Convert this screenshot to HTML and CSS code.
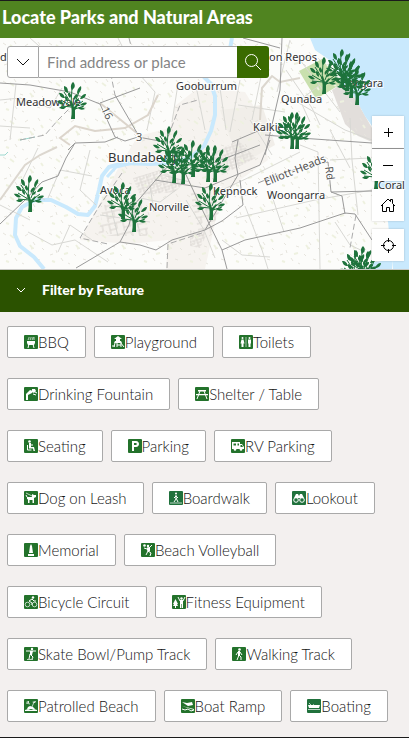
FILE: index.html
```html
<!DOCTYPE html>
<html lang="en">
<head>
    <meta charset="UTF-8">
    <meta name="viewport" content="width=device-width, initial-scale=1.0">
    <title>Locate Parks and Natural Areas</title>
    <link rel="stylesheet" href="styles.css">
</head>
<body>
    <header class="app-header">
        <h1>Locate Parks and Natural Areas</h1>
    </header>

    <section class="map" aria-label="Map">
        <svg class="map-canvas" viewBox="0 38 409 231" aria-hidden="true">
            <defs>
                <pattern id="relief" width="46" height="38" patternUnits="userSpaceOnUse">
                    <path d="M3 5l3 2M14 3l2 3M25 8l3-2M38 4l2 3M8 15l2 2M20 18l3 1M33 14l2 3M42 20l2 2M4 27l3-1M15 30l2 3M28 26l2 2M37 31l3 1M22 35l2 1M10 22l1 3M31 21l3-1" stroke="#e6e4dd" fill="none"/>
                    <path d="M10 7l4 3M30 17l3 4M18 26l4-1M41 11l2 3M6 33l3 1" stroke="#eef1e0" stroke-width="2" fill="none"/>
                </pattern>
                <pattern id="streets" width="7" height="6" patternUnits="userSpaceOnUse" patternTransform="rotate(-18)">
                    <path d="M0 1h7M0 4h5M1 0v6M5 1v3" stroke="#dcd8d4" fill="none"/>
                </pattern>
                <pattern id="blocks" width="14" height="12" patternUnits="userSpaceOnUse" patternTransform="rotate(-12)">
                    <path d="M0 2h14M4 2v10M4 8h7M11 2v6" stroke="#d9d5d0" fill="none"/>
                </pattern>
                <symbol id="tree" viewBox="0 0 30 37">
                    <path d="M14 37c1-6 1-12-1-17l2-1 2 6 4-4 1 1-4 6v9z"/>
                    <path d="M14 22L15 6M14 21L7 10M14 24L4 18M15 25L4 24M17 23L22 10M17 26L26 19M18 27L27 24" fill="none" stroke="#1e733c"/>
                    <path d="M16 0c3 3 2 6-1 8-2-3-1-6 1-8zM7 4c4 1 4 4 4 7-4-1-4-4-4-7zM24 4c1 4-1 6-4 8 0-4 1-6 4-8zM2 11c4 0 5 2 6 5-4 0-5-2-6-5zM29 12c0 3-3 5-6 5 1-3 3-5 6-5zM0 19c4-1 5 1 7 3-3 1-5 0-7-3zM30 21c-2 3-4 3-7 2 2-2 4-3 7-2zM12 10c2 2 3 4 1 6-2-2-3-4-1-6zM20 12c1 3-1 4-3 6-1-3 0-4 3-6zM8 14c3 1 3 3 3 6-3-2-3-3-3-6zM2 26c2-2 4-2 7-1-2 3-4 2-7 1zM28 27c-3 1-5 1-7-1 2-2 5-1 7 1zM22 16c0 3-2 4-4 4 0-2 2-3 4-4z"/>
                </symbol>
            </defs>

            <rect y="38" width="409" height="231" fill="#fcfcfa"/>
            <!-- urban areas -->
            <path d="M138 136L170 128 175 106 198 88 245 92 262 120 268 160 240 180 220 200 205 269H166L168 240 130 244 80 240 95 212 120 165z" fill="#f6f3ef"/>
            <path d="M220 110L262 105 275 145 240 165z" fill="#f1eee9"/>
            <path d="M133 178L160 170 185 182 175 192 140 195zM210 155L238 140 256 158 222 175zM190 230L206 236 200 248 190 246z" fill="url(#streets)"/>
            <path d="M104 205L140 200 150 236 98 236zM190 190L222 205 210 235 200 240z" fill="url(#blocks)"/>
            <path d="M332 90L345 82 356 100 372 128V142L358 136 345 124z" fill="#e2dedb"/>
            <path d="M299 71L322 59 341 84 316 99z" fill="#c9e0ae"/>
            <rect y="38" width="409" height="231" fill="url(#relief)"/>

            <!-- sea and rivers -->
            <path d="M310 38L315 50 328 59 337 70 346 84 357 101 365 116 372 126 376 160 382 200 388 222 391 252 393 269H409V38z" fill="#c9e9fd"/>
            <path d="M372 262l20-2v9h-24z" fill="#c9e9fd"/>
            <g fill="none" stroke="#c9e9fd">
                <path d="M44 269L34 257 20 246 15 235 16 218 22 207 35 200 51 200 66 207 78 214 88 215 95 206 99 190 102 176 109 167 124 163 150 164 170 163 190 158 204 146 211 131 215 115 215 96 211 84 204 77 205 68 228 60 232 38" stroke-width="4" stroke-linejoin="round"/>
                <path d="M107 177L116 167 133 163" stroke-width="3"/>
            </g>
            <path d="M0 155L5 155 8 152M20 140L35 137" stroke="#9cd8cf" fill="none"/>

            <!-- minor roads -->
            <g fill="none" stroke="#d8d8d4">
                <path d="M0 100L20 98 50 108 62 88M16 84L10 140M30 38L55 60M118 38L132 66 155 92 147 130M0 126L30 128M38 148L20 185 45 200M90 150L80 190 96 205M48 198L60 170 92 176M0 205L30 220M58 252L70 225 92 240M28 232L52 245 75 240 108 262M178 84L172 122M196 86L205 130M220 88L226 130M186 200L204 230 215 258M166 176L190 182M140 198L160 202 176 190M100 215L150 222M110 204L118 236M130 202L140 232M150 186L154 212"/>
                <path d="M240 80L230 132M262 72L252 120M290 40L277 92M238 105L285 112M286 70L312 108 320 125M300 60L340 112M320 85L300 100 310 122M285 95L345 130 372 140M250 120L272 155M300 145L318 152 320 269M350 118L352 160 358 215M245 206L262 250 268 269M222 190L252 176 300 152M236 218L315 200 372 190M270 190L284 232M222 240L242 255 270 257M335 222L350 245 365 252M330 160L370 158M330 130L350 168"/>
            </g>
            <path d="M260 120L262 88 272 76 280 82 300 78M0 200L25 165 40 155 57 147" fill="none" stroke="#dcd7cf" stroke-width="2"/>
            <path d="M70 145L60 138 75 126 95 131 125 128 148 115 158 95M100 103L138 134" fill="none" stroke="#dcd5cc" stroke-width="2"/>

            <!-- main roads -->
            <g fill="none" stroke="#9a9a9a">
                <path d="M0 83L30 85 70 92 100 104 115 137 125 141 138 137 165 142M115 95L140 138M100 103L140 88M68 150L75 143 105 142 118 137M0 224L25 200 42 182 58 176 66 158 75 143M76 268L120 242 129 225 134 205 168 166 180 155M120 242L140 245 156 250 172 240 205 230 222 221 243 205 240 180M182 166L200 205 222 250 227 269M155 180L205 188 260 165 270 140M200 168L260 145M205 230L238 175 235 158 238 140M222 250L245 240 300 228 345 213 355 214 372 240M258 183L275 176 300 168 328 162 331 192 342 196 345 214M331 192L372 191M232 142L265 128"/>
                <path d="M243 38L280 48M282 38L280 90 265 155M265 135L300 138 372 143"/>
            </g>
            <path d="M129 38L132 50 110 70 115 95M20 140L45 135 58 120 72 106M122 173L100 205 80 238 108 244M167 268L168 244 205 232M356 215L350 248M165 145L180 105 198 100" fill="none" stroke="#ababab" stroke-dasharray="6 3"/>

            <g class="map-labels">
                <text x="0" y="61">d</text>
                <text x="16" y="106">Meadowvale</text>
                <text x="176" y="90">Gooburrum</text>
                <text x="259" y="61">Mon Repos</text>
                <text x="281" y="103">Qunaba</text>
                <text x="253" y="131">Kalkie</text>
                <text x="342" y="87">Bargara</text>
                <text class="city" x="108" y="162">Bundaberg</text>
                <text x="100" y="194">Avoca</text>
                <text x="149" y="211">Norville</text>
                <text x="213" y="195">Kepnock</text>
                <text x="267" y="199">Woongarra</text>
                <text class="road" transform="translate(266 186) rotate(-22)">Elliott-Heads</text>
                <text class="road" transform="translate(325 167) rotate(82)">Rd</text>
                <text class="road" transform="translate(101 109) rotate(65)">16</text>
                <text class="road" x="136" y="141">3</text>
            </g>

            <g fill="#1e733c">
                <use href="#tree" x="57" y="82" width="30" height="37"/>
                <use href="#tree" x="14" y="175" width="30" height="37"/>
                <use href="#tree" x="153" y="126" width="30" height="37"/>
                <use href="#tree" x="158" y="146" width="30" height="37"/>
                <use href="#tree" x="167" y="147" width="30" height="37"/>
                <use href="#tree" x="177" y="140" width="30" height="37"/>
                <use href="#tree" x="192" y="145" width="30" height="37"/>
                <use href="#tree" x="199" y="145" width="30" height="37"/>
                <use href="#tree" x="195" y="183" width="30" height="37"/>
                <use href="#tree" x="107" y="182" width="30" height="37"/>
                <use href="#tree" x="118" y="195" width="30" height="37"/>
                <use href="#tree" x="276" y="112" width="30" height="37"/>
                <use href="#tree" x="281" y="112" width="30" height="37"/>
                <use href="#tree" x="308" y="57" width="30" height="37"/>
                <use href="#tree" x="326" y="49" width="30" height="37"/>
                <use href="#tree" x="331" y="54" width="30" height="37"/>
                <use href="#tree" x="335" y="61" width="30" height="37"/>
                <use href="#tree" x="341" y="68" width="30" height="37"/>
                <use href="#tree" x="360" y="152" width="30" height="37"/>
                <use href="#tree" x="340" y="250" width="30" height="37"/>
                <use href="#tree" x="347" y="246" width="30" height="37"/>
                <use href="#tree" x="352" y="251" width="30" height="37"/>
            </g>
            <g class="map-labels">
                <text x="378" y="189">Coral</text>
            </g>
        </svg>

        <form class="search" role="search">
            <button class="search-source" type="button" aria-label="Search sources">
                <svg width="14" height="14" viewBox="0 0 14 14"><path d="M1 4l6 6 6-6"/></svg>
            </button>
            <input class="search-input" type="text" aria-label="Find address or place" placeholder="Find address or place">
            <button class="search-submit" type="button" aria-label="Search">
                <svg width="18" height="18" viewBox="0 0 18 18"><circle cx="7.500" cy="7.500" r="6"/><path d="M12 12l5 5"/></svg>
            </button>
        </form>

        <div class="map-tools">
            <div class="tool-group">
                <button class="tool-btn" type="button" aria-label="Zoom in">
                    <svg width="16" height="16" viewBox="0 0 16 16"><path d="M8.500 4v9M4 8.500h9"/></svg>
                </button>
                <button class="tool-btn" type="button" aria-label="Zoom out">
                    <svg width="16" height="16" viewBox="0 0 16 16"><path d="M3 8.500h10"/></svg>
                </button>
            </div>
            <button class="tool-btn" type="button" aria-label="Default map view">
                <svg width="16" height="16" viewBox="0 0 16 16"><path d="M1 9l7-7 2.500 2.500V2.500h2v4L15 9M2.500 8v6.500h4v-4h3v4h4V8"/></svg>
            </button>
            <button class="tool-btn" type="button" aria-label="Find my location">
                <svg width="16" height="16" viewBox="0 0 16 16"><circle cx="8.500" cy="8.500" r="5"/><path d="M8.500 1v4M8.500 12v4M1 8.500h4M12 8.500h4"/></svg>
            </button>
        </div>
    </section>

    <main class="filter">
        <button class="filter-toggle" type="button" aria-expanded="true">
            <svg width="10" height="10" viewBox="0 0 10 10"><path d="M1 3l4 4 4-4"/></svg>
            <span>Filter by Feature</span>
        </button>

        <div class="filter-list">
            <button class="filter-btn" type="button">
                <svg class="icon" viewBox="0 0 14 14"><path d="M3 6h8v2l-1 2H4L3 8z"/><path class="line" d="M5 9l-1 4M9 9l1 4"/><path class="line thin" d="M5 2v1l-1 2M7 2v1L6 5M9 2v1L8 5M10 2v3"/></svg>BBQ
            </button>
            <button class="filter-btn" type="button">
                <svg class="icon" viewBox="0 0 14 14"><path d="M7 1l4 3H9v2H5V4H3zM4 6h6l1 2H3z"/><path class="line" d="M4 8l-1 4M9 7l4 5M6 8v4M6 10h4M1 11h3M10 8v4"/></svg>Playground
            </button>
            <button class="filter-btn" type="button">
                <svg class="icon" viewBox="0 0 14 14"><circle cx="3.500" cy="3" r="1"/><circle cx="10.500" cy="3" r="1"/><path d="M2.500 4.500h2l1 4h-1V12h-2V8.500h-1zM9 4.500h3v4h-.500V12h-2V8.500H9zM6.700 2h.600v10h-.600z"/></svg>Toilets
            </button>
            <button class="filter-btn" type="button">
                <svg class="icon" viewBox="0 0 14 14"><path d="M2 13V7l4-4 3 1-1 2-2 1-2 1v5zM8 2h3l1 2-2 2-2-1z"/><path class="line" d="M9 7l3 1M11 5l2 1"/></svg>Drinking Fountain
            </button>
            <button class="filter-btn" type="button">
                <svg class="icon" viewBox="0 0 14 14"><path d="M3 3h8v1.500H3zM1 7h12v1.200H1z"/><path class="line" d="M5 4l-3 8M9 4l3 8"/></svg>Shelter / Table
            </button>
            <button class="filter-btn" type="button">
                <svg class="icon" viewBox="0 0 14 14"><circle cx="5.500" cy="2.500" r="1.300"/><path d="M5 4h2v4h3l1 4H9.500L9 9.500H5z"/><path class="line" d="M3.500 6v5h4M7 6h2"/></svg>Seating
            </button>
            <button class="filter-btn" type="button">
                <svg class="icon" viewBox="0 0 14 14"><path d="M4 2h4c4 0 4 6 0 6H6v4H4zM6 4v2h2c1 0 1-2 0-2z" fill-rule="evenodd"/></svg>Parking
            </button>
            <button class="filter-btn" type="button">
                <svg class="icon" viewBox="0 0 14 14"><path d="M1 3h8v2h2l2 3v2H1zM2.500 4.500v2H5v-2zM6.500 4.500v2H8v-2zM9.500 6v2H12l-1-2z" fill-rule="evenodd"/><circle cx="4" cy="10.500" r="1.300"/><circle cx="10" cy="10.500" r="1.300"/></svg>RV Parking
            </button>
            <button class="filter-btn" type="button">
                <svg class="icon" viewBox="0 0 14 14"><path d="M3 6h5V3l2 1h2v2l-2 1v5H8.500V9H5.500v3H4V8.500L3 8z"/><path class="line" d="M3 6L2 4"/><path class="line thin" d="M2 2l6 3"/></svg>Dog on Leash
            </button>
            <button class="filter-btn teal" type="button">
                <svg class="icon" viewBox="0 0 14 14"><circle cx="7" cy="2.500" r="1"/><path class="line" d="M7 4v4l-2 3M7 7l2 4M5 7l2-2 2 2"/><path class="line thin" d="M1 12h12"/></svg>Boardwalk
            </button>
            <button class="filter-btn teal" type="button">
                <svg class="icon" viewBox="0 0 14 14"><path d="M4 3h2l1 2 1-2h2l2 4H2z"/><circle class="line" cx="4" cy="9" r="2.300"/><circle class="line" cx="10" cy="9" r="2.300"/></svg>Lookout
            </button>
            <button class="filter-btn" type="button">
                <svg class="icon" viewBox="0 0 14 14"><path d="M6 3l1-2 1 2 1 7H5zM4 11h6v2H4z"/></svg>Memorial
            </button>
            <button class="filter-btn" type="button">
                <svg class="icon" viewBox="0 0 14 14"><circle cx="3.500" cy="2.500" r="1.300"/><circle cx="7" cy="3" r="1.200"/><path d="M6 4.500l3-.500v4l-2 1-1-2z"/><path class="line" d="M3 5l3 1M8 5l3-3M7 8l3 2-1 3M7 8l-2 4"/></svg>Beach Volleyball
            </button>
            <button class="filter-btn" type="button">
                <svg class="icon" viewBox="0 0 14 14"><circle cx="9" cy="2.500" r="1.200"/><circle class="line thin" cx="3.500" cy="9.500" r="2.300"/><circle class="line thin" cx="10.500" cy="9.500" r="2.300"/><path class="line" d="M8 4L5 6l3 2v2M8 4l2 2h2"/></svg>Bicycle Circuit
            </button>
            <button class="filter-btn" type="button">
                <svg class="icon" viewBox="0 0 14 14"><path d="M3.500 4L6 9H5l1 2H4v2H3v-2H1l1-2H1zM8 5h3v8H9.800V9h-.600v4H8z"/><circle cx="9.500" cy="3.500" r="1.200"/><path class="line" d="M8 6L6 2M11 6l2-4"/></svg>Fitness Equipment
            </button>
            <button class="filter-btn" type="button">
                <svg class="icon" viewBox="0 0 14 14"><circle cx="8" cy="2" r="1.200"/><path d="M6 4h3L8 8H6z"/><path class="line" d="M2 4h10M7 8l2 2-1 2M6 7l-1 5"/><path class="line thin" d="M3 12.500h6"/></svg>Skate Bowl/Pump Track
            </button>
            <button class="filter-btn" type="button">
                <svg class="icon" viewBox="0 0 14 14"><circle cx="7.500" cy="2.500" r="1.300"/><path d="M6 4h2v5H6z"/><path class="line" d="M6 5L4 8M8 5l2 3M7 8l-2 5M7 8l2 2v3"/></svg>Walking Track
            </button>
            <button class="filter-btn" type="button">
                <svg class="icon" viewBox="0 0 14 14"><path d="M4 8l2-1 3 1 2 2H3zM1 11l3-1 3 1 3-1 3 1v1H1zM2 3l3-1v2zM8 3l4-1-1 2z"/><path class="line thin" d="M2 4l4 1M10 3L8 8"/></svg>Patrolled Beach
            </button>
            <button class="filter-btn" type="button">
                <svg class="icon" viewBox="0 0 14 14"><path d="M1 3l5 1 5-1 1 3-5 1zM1 7l12 3v1z"/><path class="line" d="M1 10l3 1 3-1 3 2 3-1"/></svg>Boat Ramp
            </button>
            <button class="filter-btn teal" type="button">
                <svg class="icon" viewBox="0 0 14 14"><path d="M1 6h5l1-1v1h6l-1 3H2z"/><path class="line thin" d="M1 10.500h12M2 4l2 2"/></svg>Boating
            </button>
        </div>
    </main>
</body>
</html>
```
FILE: styles.css
```css
* {
    box-sizing: border-box;
}

body {
    display: flex;
    flex-direction: column;
    min-height: 100vh;
    margin: 0;
    border-top: 1px solid #1b1b1b;
    border-bottom: 1px solid #1b1b1b;
    background: #f3f0ef;
    color: #151515;
    font-family: Lato, "Open Sans", sans-serif;
    font-size: 15px;
}

button,
input {
    margin: 0;
    font: inherit;
    color: inherit;
}

button {
    cursor: pointer;
}

.app-header {
    padding: 4px 2px 9px;
    background: #508420;
    color: #fff;
}

.app-header h1 {
    margin: 0;
    font-size: 18px;
    line-height: 24px;
    font-weight: 900;
}

/* Map */
.map {
    position: relative;
    border-bottom: 1px solid #c8c8c4;
}

.map-canvas {
    display: block;
    width: 100%;
}

.map-labels {
    font-family: "Noto Sans", sans-serif;
    font-size: 11px;
    fill: #333;
    stroke: #fff;
    stroke-width: 2px;
    stroke-opacity: 0.8;
    paint-order: stroke;
}

.map-labels .city {
    font-size: 13px;
}

.map-labels .road {
    fill: #555;
}

.search {
    position: absolute;
    top: 8px;
    left: 7px;
    display: flex;
    width: 64%;
    height: 32px;
}

.search svg,
.tool-btn svg,
.filter-toggle svg {
    fill: none;
    stroke: currentColor;
}

.search-source,
.search-submit,
.tool-btn {
    display: flex;
    align-items: center;
    justify-content: center;
    flex: none;
    width: 32px;
    height: 32px;
    padding: 0;
    border: 0;
    background: #fff;
}

.search-source {
    border: 1px solid #a5a5a5;
    border-radius: 3px 0 0 3px;
}

.search-input {
    flex: 1;
    min-width: 0;
    padding: 0 8px;
    border: 1px solid #a5a5a5;
    border-width: 1px 0;
    background: #fff;
}

.search-input::placeholder {
    color: #858585;
    opacity: 1;
}

.search-submit {
    border-radius: 0 3px 3px 0;
    background: #3a6b00;
    color: #fff;
}

.map-tools {
    position: absolute;
    right: 5px;
    bottom: 8px;
    display: flex;
    flex-direction: column;
    gap: 8px;
}

.tool-group {
    display: flex;
    flex-direction: column;
    gap: 1px;
    background: #a5a5a5;
}

.tool-btn {
    color: #000;
    box-shadow: 0 0 2px rgba(0, 0, 0, 0.2);
}

/* Filter */
.filter-toggle {
    display: flex;
    align-items: center;
    gap: 16px;
    width: 100%;
    height: 42px;
    padding: 0 16px 3px;
    border: 0;
    background: #2b5200;
    color: #fff;
    font-size: 14px;
    font-weight: 900;
}

.filter-list {
    display: flex;
    flex-wrap: wrap;
    gap: 20px 8px;
    padding: 14px 7px 13px;
}

.filter-btn {
    display: flex;
    align-items: center;
    height: 32px;
    padding: 0 16px;
    border: 1px solid #a9a9a9;
    border-radius: 2px;
    background: #fff;
    font-weight: 300;
    white-space: nowrap;
}

.icon {
    width: 14px;
    height: 14px;
    border-radius: 1px;
    background: #23722b;
    fill: #fff;
}

.teal .icon {
    background: #20713c;
}

.icon .line {
    fill: none;
    stroke: #fff;
}

.icon .thin {
    stroke-opacity: 0.7;
}
```
